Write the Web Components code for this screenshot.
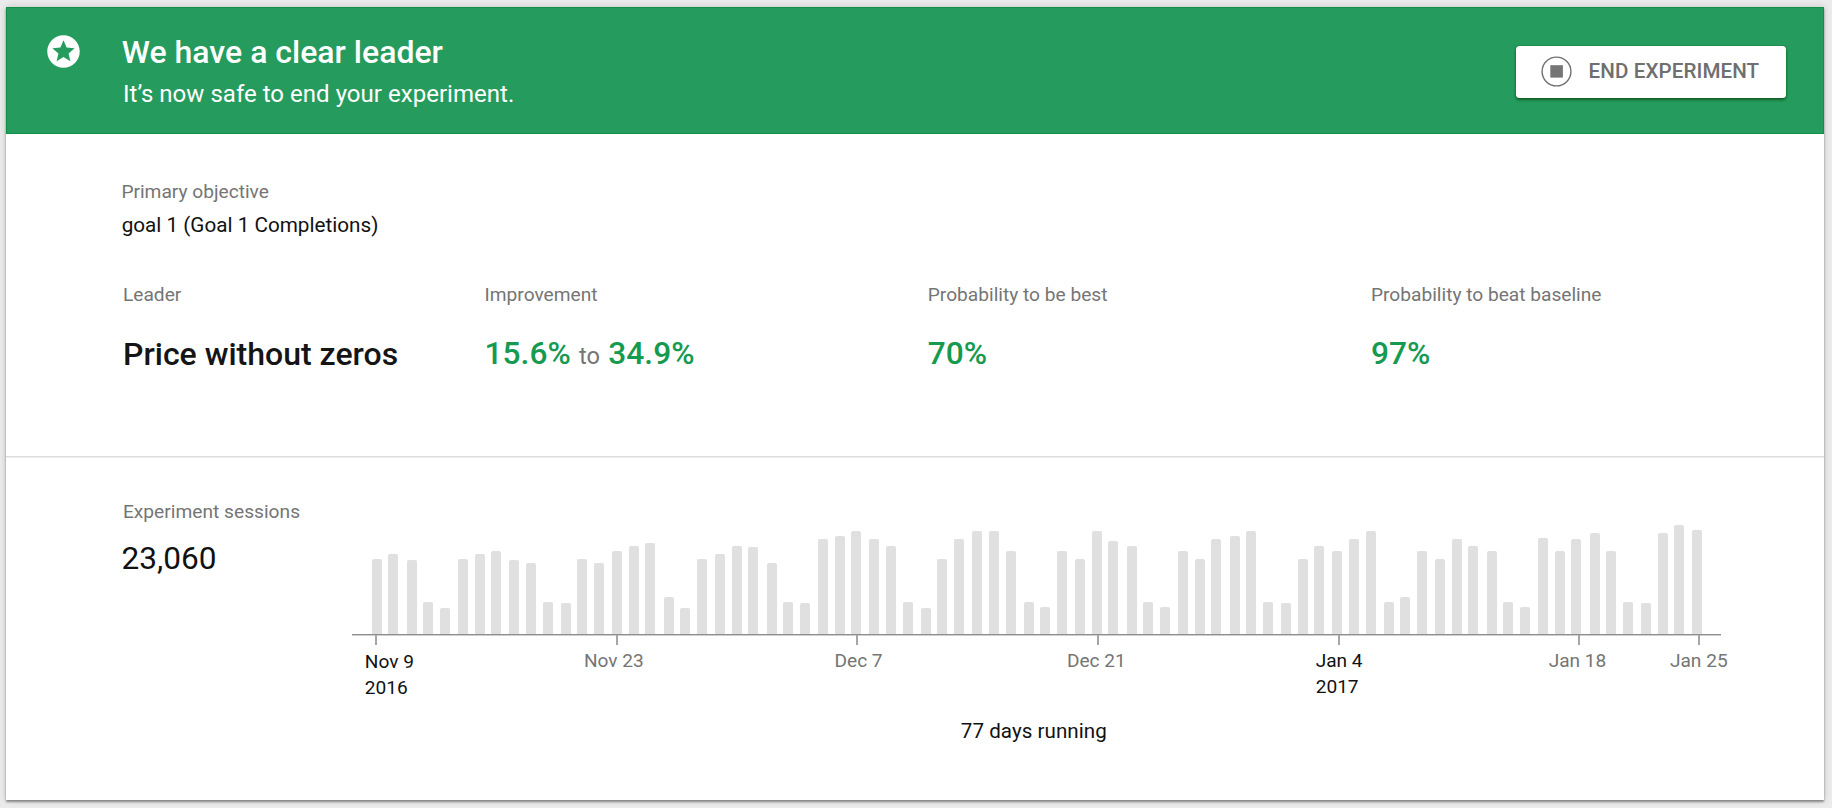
<!DOCTYPE html>
<html lang="en">
<head>
<meta charset="utf-8">
<title>Experiment report</title>
<style>
  html, body { margin: 0; height: 100%; }
  body { background: #ebebeb; font-family: Roboto, "Liberation Sans", sans-serif; color: #111; overflow: hidden; }
</style>
</head>
<body>
<experiment-card>
  <leader-banner slot="banner">
    <span slot="title">We have a clear leader</span>
    <span slot="subtitle">It’s now safe to end your experiment.</span>
    <end-button slot="action">END EXPERIMENT</end-button>
  </leader-banner>
  <objective-info slot="summary">
    <span slot="label">Primary objective</span>
    <span slot="value">goal 1 (Goal 1 Completions)</span>
  </objective-info>
  <metric-row slot="summary">
    <metric-item class="dark"><span slot="label">Leader</span><span>Price without zeros</span></metric-item>
    <metric-item><span slot="label">Improvement</span><span>15.6%</span><small>to</small><span>34.9%</span></metric-item>
    <metric-item><span slot="label">Probability to be best</span><span>70%</span></metric-item>
    <metric-item><span slot="label">Probability to beat baseline</span><span>97%</span></metric-item>
  </metric-row>
  <session-count slot="sessions">
    <span slot="label">Experiment sessions</span>
    <span slot="value">23,060</span>
  </session-count>
  <sessions-chart slot="sessions">
    <axis-tick class="year" style="--w:240.9px;--x:-10.2px;--y:1px">Nov 9<span slot="year">2016</span></axis-tick>
    <axis-tick style="--w:240.5px;--x:-32px">Nov 23</axis-tick>
    <axis-tick style="--w:240.6px;--x:-21.9px">Dec 7</axis-tick>
    <axis-tick style="--w:240.6px;--x:-30px">Dec 21</axis-tick>
    <axis-tick class="year" style="--w:240.7px;--x:-21.9px">Jan 4<span slot="year">2017</span></axis-tick>
    <axis-tick style="--w:119.4px;--x:-29.6px">Jan 18</axis-tick>
    <axis-tick style="--w:20px;--x:-27.7px">Jan 25</axis-tick>
    <span slot="caption">77 days running</span>
  </sessions-chart>
</experiment-card>

<script>
const define = (name, html, setup) => {
  const tpl = document.createElement('template');
  tpl.innerHTML = html;
  customElements.define(name, class extends HTMLElement {
    constructor() {
      super();
      this.attachShadow({ mode: 'open' }).appendChild(tpl.content.cloneNode(true));
      if (setup) setup(this.shadowRoot);
    }
  });
};

define('experiment-card', `
  <style>
    :host { display: block; padding: 7px 8px 8px 6px; box-sizing: border-box; height: 808px; }
    article { height: 793px; background: #fff; display: flex; flex-direction: column;
      box-shadow: 0 1.5px 2px rgba(0,0,0,.38), 0 0 7px rgba(0,0,0,.16); }
    .summary { box-sizing: border-box; height: 322px; padding: 45.6px 0 0 116px; }
    .sessions { flex: 1; display: flex; border-top: 1px solid #dcdcdc; box-shadow: inset 0 1px 0 #eee; padding: 43px 0 0 116.4px; }
  </style>
  <article>
    <slot name="banner"></slot>
    <div class="summary"><slot name="summary"></slot></div>
    <div class="sessions"><slot name="sessions"></slot></div>
  </article>`);

define('leader-banner', `
  <style>
    :host { display: flex; align-items: flex-start; height: 127px; box-sizing: border-box;
      background: #259b5d; color: #fff; padding-left: 38.4px; padding-right: 38.5px;
      box-shadow: inset 0 0 0 1px #0f9145; }
    svg { width: 39px; height: 39px; margin-top: 25px; fill: #fff; flex: none; }
    .text { flex: 1; margin: 26px 0 0 38.4px; display: flex; flex-direction: column; gap: 7px; }
    .title { font-size: 32px; line-height: 38px; font-weight: 500; }
    .sub { font-size: 24px; line-height: 32px; letter-spacing: .03px; padding-left: 1.2px; }
    .action { margin-top: 39px; }
  </style>
  <svg viewBox="0 0 24 24"><path d="M11.99 2C6.47 2 2 6.48 2 12s4.47 10 9.99 10C17.52 22 22 17.52 22 12S17.52 2 11.99 2zm4.24 16L12 15.45 7.77 18l1.12-4.81-3.73-3.23 4.92-.42L12 5l1.92 4.53 4.92.42-3.73 3.23L16.23 18z"/></svg>
  <div class="text">
    <div class="title"><slot name="title"></slot></div>
    <div class="sub"><slot name="subtitle"></slot></div>
  </div>
  <div class="action"><slot name="action"></slot></div>`);

define('end-button', `
  <style>
    :host { display: block; }
    button { all: unset; box-sizing: border-box; display: flex; align-items: center; width: 269.5px; height: 51.5px;
      padding-left: 25px; background: #fff; color: #6f6f6f; border-radius: 3.5px; cursor: pointer;
      font-size: 20.6px; font-weight: 500; line-height: 28px; letter-spacing: .08px; white-space: nowrap;
      box-shadow: 0 2px 3px rgba(0,50,0,.55), 0 0 1.5px rgba(0,90,0,.7); }
    svg { width: 31px; height: 31px; margin-right: 16.6px; flex: none; }
    span { margin-top: -1px; }
  </style>
  <button type="button">
    <svg viewBox="0 0 31 31"><circle cx="15.5" cy="15.5" r="14.4" fill="none" stroke="#707070" stroke-width="1.4"/><rect x="9.3" y="9.2" width="12.6" height="12.4" fill="#757575"/></svg>
    <span><slot></slot></span>
  </button>`);

define('objective-info', `
  <style>
    :host { display: flex; flex-direction: column; gap: 7px; }
    .l { font-size: 19.15px; line-height: 24px; color: #757575; margin-left: -.6px; }
    .v { font-size: 20.7px; line-height: 28px; color: #111; margin-left: -.3px; }
  </style>
  <div class="l"><slot name="label"></slot></div>
  <div class="v"><slot name="value"></slot></div>`);

define('metric-row', `
  <style>
    :host { display: grid; grid-template-columns: 361.6px 443.2px 443.2px 1fr; margin: 44.8px 0 0 1px; }
  </style>
  <slot></slot>`);

define('metric-item', `
  <style>
    :host { display: flex; flex-direction: column; gap: 26.8px; color: #159a50; }
    :host(.dark) { color: #151515; }
    .l { font-size: 19.15px; line-height: 24px; color: #757575; }
    .v { display: flex; align-items: baseline; gap: 8.3px; font-size: 31.7px; line-height: 40px; font-weight: 500; }
    :host(.dark) .v { font-size: 32px; }
    ::slotted(small) { font-size: 23.6px; font-weight: 400; color: #757575; }
  </style>
  <div class="l"><slot name="label"></slot></div>
  <div class="v"><slot></slot></div>`);

define('session-count', `
  <style>
    :host { display: flex; flex-direction: column; gap: 14.8px; width: 229.6px; flex: none; }
    .l { font-size: 19.2px; line-height: 24px; color: #757575; padding-left: .5px; }
    .v { font-size: 31.6px; line-height: 40px; color: #111; margin-left: -.8px; }
  </style>
  <div class="l"><slot name="label"></slot></div>
  <div class="v"><slot name="value"></slot></div>`);

define('axis-tick', `
  <style>
    :host { display: block; width: var(--w); flex: none; }
    i { display: block; width: 2px; height: 10px; background: #a6a6a6; }
    div { margin: calc(3.4px + var(--y, 0px)) 0 0 var(--x); font-size: 19.1px; line-height: 25.5px; color: #757575; white-space: nowrap; }
    :host(.year) div { color: #111; }
    slot[name=year] { display: block; }
  </style>
  <i></i>
  <div><slot></slot><slot name="year"></slot></div>`);

/* Bar heights in thirds of a pixel, one per day. */
const DAYS = [226,240,221,96,77,226,240,250,221,212,96,92,226,212,250,264,274,110,77,226,241,264,260,212,97,92,284,293,308,
  284,264,97,77,226,284,308,308,250,97,82,250,226,308,278,264,97,82,250,226,284,293,308,97,92,226,264,250,284,308,
  97,110,250,226,284,264,250,97,82,288,250,284,303,250,97,92,303,326,313];

define('sessions-chart', `
  <style>
    :host { display: block; width: 1369px; flex: none; }
    .bars { display: flex; align-items: flex-end; height: 134px; padding-left: 19.7px; border-bottom: 1px solid #8e8e8e; box-shadow: 0 1px 0 #cfcfcf; }
    .bars b { width: 10px; flex: none; background: #e0e0e0; border-radius: 2px 2px 0 0; margin-right: 6.6px; }
    .bars b:nth-child(3n+2) { margin-right: 8.26px; }
    .ticks { display: flex; padding-left: 23px; height: 84px; width: 1400px; box-sizing: border-box; }
    .cap { font-size: 20.6px; line-height: 28px; color: #111; padding-left: 608.8px; margin-top: -2.4px; letter-spacing: .04px; }
  </style>
  <div class="bars"></div>
  <div class="ticks"><slot></slot></div>
  <div class="cap"><slot name="caption"></slot></div>`,
  root => {
    root.querySelector('.bars').innerHTML = DAYS.map(h => `<b style="height:${(h / 3).toFixed(2)}px"></b>`).join('');
  });
</script>
</body>
</html>
